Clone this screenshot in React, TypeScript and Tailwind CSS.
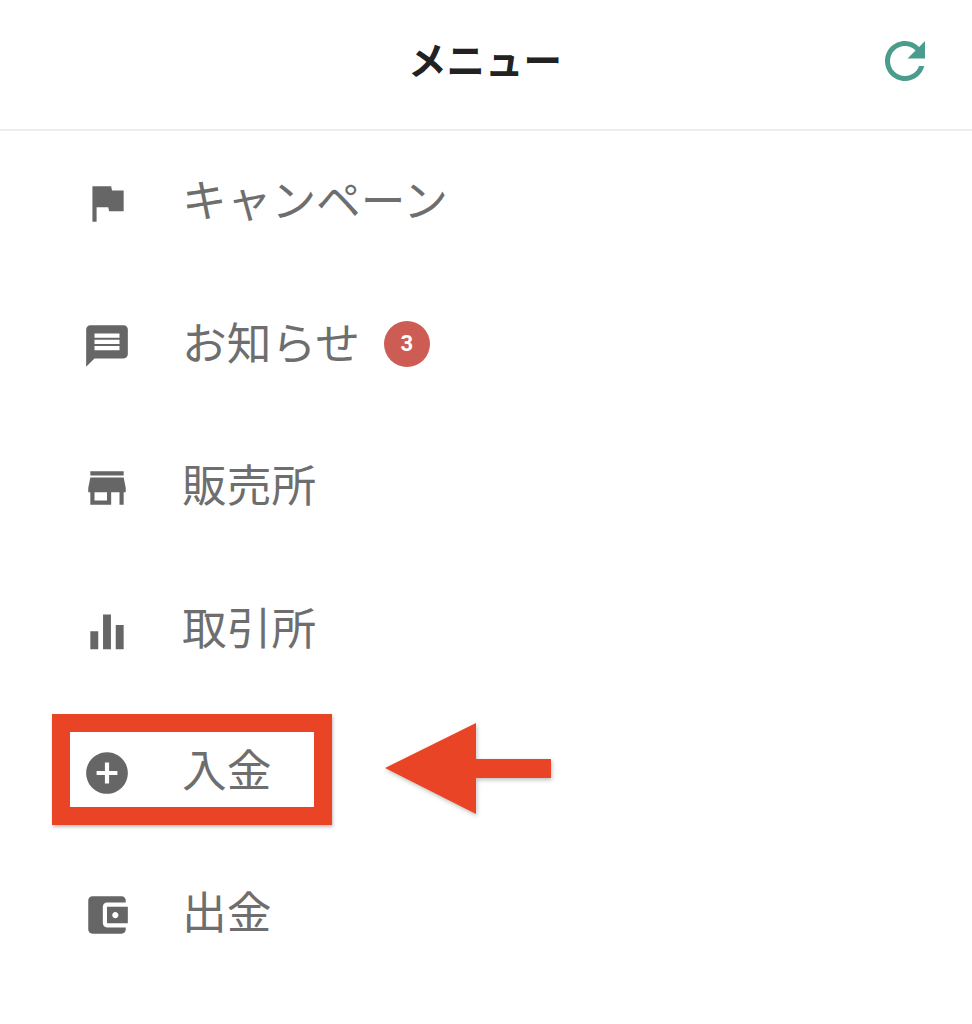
const paths = {
  flag: "M14.4 6L14 4H5v17h2v-7h5.6l.4 2h7V6z",
  message: "M20 2H4c-1.1 0-1.99.9-1.99 2L2 22l4-4h14c1.1 0 2-.9 2-2V4c0-1.1-.9-2-2-2zm-2 12H6v-2h12v2zm0-3H6V9h12v2zm0-3H6V6h12v2z",
  store: "M20 4H4v2h16V4zm1 10v-2l-1-5H4l-1 5v2h1v6h10v-6h4v6h2v-6h1zm-9 4H6v-4h6v4z",
  bars: "M4 12.6h3.8v8.6H4zM10.1 4.6h3.8v16.6h-3.8zM16.2 9.6H20v11.6h-3.8z",
  plus: "M12 2C6.48 2 2 6.48 2 12s4.48 10 10 10 10-4.48 10-10S17.52 2 12 2zm5 11h-4v4h-2v-4H7v-2h4V7h2v4h4v2z",
  wallet: "M21 18v1c0 1.1-.9 2-2 2H5c-1.11 0-2-.9-2-2V5c0-1.1.89-2 2-2h14c1.1 0 2 .9 2 2v1h-9c-1.11 0-2 .9-2 2v8c0 1.1.89 2 2 2h9zm-9-2h10V8H12v8zm4-2.5c-.83 0-1.5-.67-1.5-1.5s.67-1.5 1.5-1.5 1.5.67 1.5 1.5-.67 1.5-1.5 1.5z",
};

const items = [
  { label: "キャンペーン", icon: paths.flag },
  { label: "お知らせ", icon: paths.message, badge: 3 },
  { label: "販売所", icon: paths.store },
  { label: "取引所", icon: paths.bars },
  { label: "入金", icon: paths.plus },
  { label: "出金", icon: paths.wallet },
];

export default function App() {
  return (
    <div className="relative h-[1024px] w-[972px] overflow-hidden bg-white font-['Noto_Sans_CJK_JP',sans-serif]">
      <header className="flex h-[131px] items-center justify-between border-b-2 border-[#ececec] pb-[8px] pl-[408px] pr-[37px]">
        <h1 className="pb-[4px] text-[38.5px] font-bold leading-none text-[#222222]">メニュー</h1>
        <svg viewBox="0 0 24 24" className="h-[60px] w-[60px] fill-[#4a9d8d]">
          <path d="M17.65 6.35C16.2 4.9 14.21 4 12 4c-4.42 0-7.99 3.58-7.99 8s3.57 8 7.99 8c3.73 0 6.84-2.55 7.73-6h-2.08c-.82 2.33-3.04 4-5.65 4-3.31 0-6-2.69-6-6s2.69-6 6-6c1.66 0 3.14.69 4.22 1.78L13 11h7V4l-2.35 2.35z" />
        </svg>
      </header>

      <ul>
        {items.map((item) => (
          <li key={item.label} className="flex h-[142.4px] items-center pl-[82px]">
            <svg viewBox="0 0 24 24" className="mt-[2px] h-[50px] w-[50px] fill-[#666666]">
              <path d={item.icon} />
            </svg>
            <span className="ml-[50px] pb-[7px] text-[44.7px] leading-none text-[#6e6e6e]">{item.label}</span>
            {item.badge && (
              <span className="-mt-[2px] ml-[24px] flex h-[46px] w-[46px] items-center justify-center rounded-full bg-[#cd5c55] font-['Roboto',sans-serif] text-[22px] font-bold text-white">
                {item.badge}
              </span>
            )}
          </li>
        ))}
      </ul>

      {/* annotation drawn over the screenshot */}
      <div className="absolute left-[52px] top-[714px] h-[111px] w-[280px] border-[18px] border-[#e94425] shadow-[1px_2px_3px_rgba(0,0,0,0.25)]" />
      <svg viewBox="0 0 170 96" className="absolute left-[384px] top-[721px] h-[96px] w-[170px] drop-shadow-[1px_2px_2px_rgba(0,0,0,0.25)]">
        <path d="M1 47 L92 2 V38 H167 V57 H92 V93 Z" fill="#e94425" />
      </svg>
    </div>
  );
}
